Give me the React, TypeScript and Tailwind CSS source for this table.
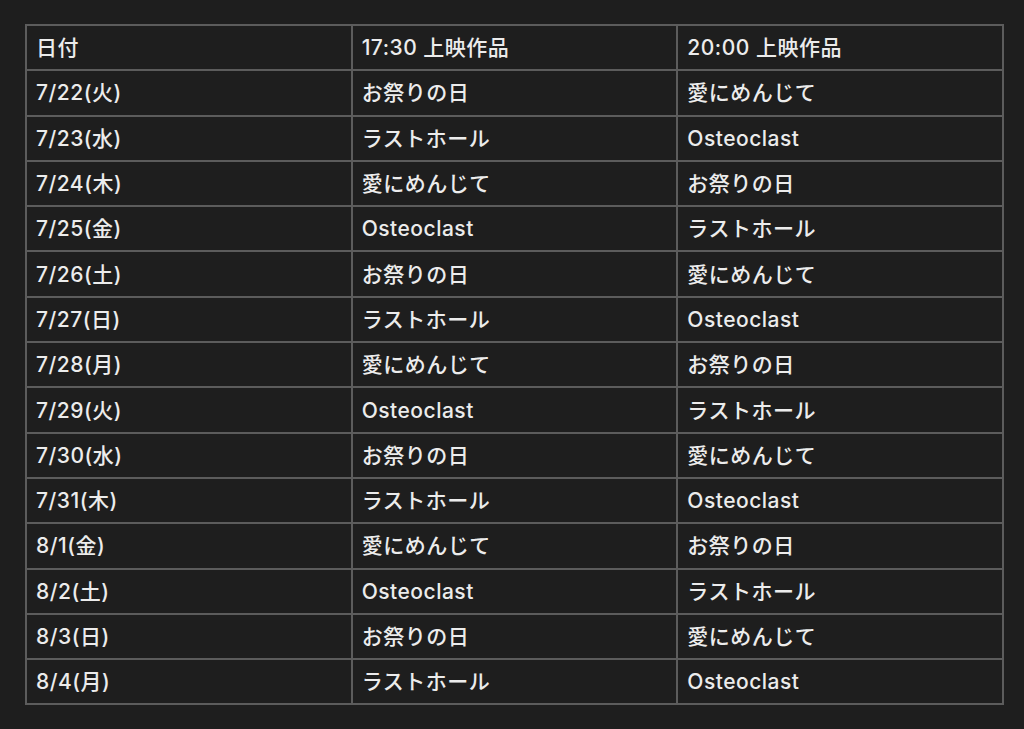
const rows: [string, string, string][] = [
  ['7/22(火)', 'お祭りの日', '愛にめんじて'],
  ['7/23(水)', 'ラストホール', 'Osteoclast'],
  ['7/24(木)', '愛にめんじて', 'お祭りの日'],
  ['7/25(金)', 'Osteoclast', 'ラストホール'],
  ['7/26(土)', 'お祭りの日', '愛にめんじて'],
  ['7/27(日)', 'ラストホール', 'Osteoclast'],
  ['7/28(月)', '愛にめんじて', 'お祭りの日'],
  ['7/29(火)', 'Osteoclast', 'ラストホール'],
  ['7/30(水)', 'お祭りの日', '愛にめんじて'],
  ['7/31(木)', 'ラストホール', 'Osteoclast'],
  ['8/1(金)', '愛にめんじて', 'お祭りの日'],
  ['8/2(土)', 'Osteoclast', 'ラストホール'],
  ['8/3(日)', 'お祭りの日', '愛にめんじて'],
  ['8/4(月)', 'ラストホール', 'Osteoclast'],
];

const cell = 'border-2 border-[#5c5c5c] h-[45.3px] px-[9px] py-0 text-left align-middle font-medium';

export default function App() {
  return (
    <div
      className="w-[1024px] h-[729px] bg-[#1e1e1e] text-[#ececec] pt-[24px] pl-[25px] text-[21px] leading-none tracking-[0.5px]"
      style={{ fontFamily: 'Inter, "Noto Sans CJK JP", sans-serif' }}
    >
      <table className="w-[979px] table-fixed border-collapse">
        <thead>
          <tr>
            <th className={cell}>日付</th>
            <th className={cell}>17:30 上映作品</th>
            <th className={cell}>20:00 上映作品</th>
          </tr>
        </thead>
        <tbody>
          {rows.map((r) => (
            <tr key={r[0]}>
              {r.map((c, i) => (
                <td key={i} className={cell}>
                  {c}
                </td>
              ))}
            </tr>
          ))}
        </tbody>
      </table>
    </div>
  );
}
